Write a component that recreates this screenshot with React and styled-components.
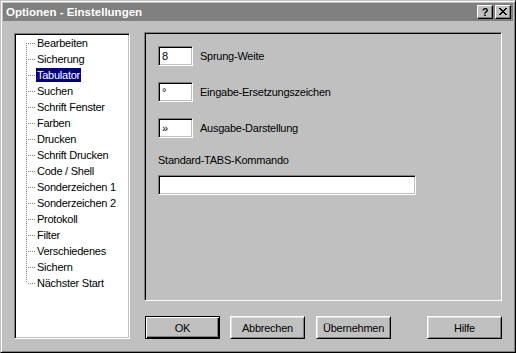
import React from "react";
import styled, { createGlobalStyle } from "styled-components";

const GlobalStyle = createGlobalStyle`
  html, body {
    margin: 0;
    padding: 0;
    background: #c0c0c0;
  }
  body {
    font-family: "Liberation Sans", Arial, sans-serif;
    font-size: 11px;
    color: #000;
  }
`;

const Window = styled.div`
  box-sizing: border-box;
  width: 516px;
  height: 353px;
  display: flex;
  flex-direction: column;
  background: #c0c0c0;
  border: 1px solid;
  border-color: #c0c0c0 #000 #000 #c0c0c0;
  box-shadow: inset 1px 1px #fff, inset -1px -1px #808080;
  padding: 2px;
`;

const TitleBar = styled.div`
  height: 18px;
  display: flex;
  align-items: center;
  background: #808080;
  padding: 0 2px 0 3px;
`;

const Title = styled.div`
  flex: 1;
  color: #fff;
  font-weight: bold;
  font-size: 11.5px;
  line-height: 18px;
`;

const CaptionButton = styled.div`
  box-sizing: border-box;
  width: 16px;
  height: 14px;
  margin-left: ${props => props.gap || 0}px;
  display: flex;
  align-items: center;
  justify-content: center;
  background: #c0c0c0;
  border: 1px solid;
  border-color: #fff #000 #000 #fff;
  box-shadow: inset -1px -1px #808080;
  font-weight: bold;
  font-size: 11px;
  line-height: 12px;
  padding-bottom: 1px;
`;

const Body = styled.div`
  flex: 1;
  display: flex;
  align-items: flex-start;
  padding: 11px 11px 0 11px;
`;

const Sunken = styled.div`
  box-sizing: border-box;
  border: 1px solid;
  border-color: #808080 #fff #fff #808080;
  box-shadow: inset 1px 1px #000, inset -1px -1px #c0c0c0;
`;

const Tree = styled(Sunken)`
  width: 117px;
  height: 306px;
  margin-top: 1px;
  padding: 1px;
  background: #fff;
`;

const Row = styled.div`
  height: 16px;
  display: flex;
  align-items: center;
  letter-spacing: -0.25px;
`;

const Connector = styled.div`
  position: relative;
  width: 20px;
  align-self: stretch;

  &::before {
    content: "";
    position: absolute;
    left: 10px;
    width: 1px;
    top: ${props => (props.first ? 8 : 0)}px;
    bottom: ${props => (props.last ? 8 : 0)}px;
    background: linear-gradient(#808080 50%, transparent 50%) 0 0 / 1px 2px;
  }

  &::after {
    content: "";
    position: absolute;
    left: 11px;
    top: 8px;
    width: 9px;
    height: 1px;
    background: linear-gradient(to right, transparent 50%, #808080 50%) 0 0 / 2px 1px;
  }
`;

const Label = styled.span`
  height: 14px;
  line-height: 14px;
  padding: 0 1px;
  white-space: nowrap;
  background: ${props => (props.selected ? "#000080" : "transparent")};
  color: ${props => (props.selected ? "#fff" : "#000")};
`;

const Side = styled.div`
  width: 359px;
  margin-left: 14px;
  display: flex;
  flex-direction: column;
`;

const Panel = styled(Sunken)`
  width: 358px;
  height: 269px;
  padding: 13px 0 0 13px;
  letter-spacing: -0.25px;
`;

const FieldRow = styled.div`
  display: flex;
  align-items: center;
  gap: 7px;
  height: 20px;
  margin-bottom: 16px;
`;

const Field = styled(Sunken)`
  width: ${props => props.width || 35}px;
  height: 20px;
  background: #fff;
  padding: 1px 0 0 3px;
  line-height: 16px;
`;

const Caption = styled.div`
  line-height: 13px;
  margin: 2px 0 8px;
`;

const Buttons = styled.div`
  display: flex;
  margin-top: 15px;
  padding-left: 1px;
`;

const Button = styled.div`
  box-sizing: border-box;
  width: 75px;
  height: 23px;
  margin-left: ${props => props.gap || 0}px;
  display: flex;
  align-items: center;
  justify-content: center;
  background: #c0c0c0;
  letter-spacing: -0.25px;
  border: 1px solid;
  border-color: ${props => (props.primary ? "#000" : "#fff #000 #000 #fff")};
  box-shadow: ${props =>
    props.primary
      ? "inset 1px 1px #fff, inset -1px -1px #000, inset -2px -2px #808080"
      : "inset 1px 1px #dfdfdf, inset -1px -1px #808080"};
  &:last-child {
    margin-left: auto;
  }
`;

const CloseGlyph = () => (
  <svg width="8" height="7" viewBox="0 0 8 7" shapeRendering="crispEdges">
    <path
      fill="#000"
      d="M0 0h2v1H0zM6 0h2v1H6zM1 1h2v1H1zM5 1h2v1H5zM2 2h4v1H2zM3 3h2v1H3zM2 4h4v1H2zM1 5h2v1H1zM5 5h2v1H5zM0 6h2v1H0zM6 6h2v1H6z"
    />
  </svg>
);

const items = [
  "Bearbeiten",
  "Sicherung",
  "Tabulator",
  "Suchen",
  "Schrift Fenster",
  "Farben",
  "Drucken",
  "Schrift Drucken",
  "Code / Shell",
  "Sonderzeichen 1",
  "Sonderzeichen 2",
  "Protokoll",
  "Filter",
  "Verschiedenes",
  "Sichern",
  "Nächster Start",
];

const fields = [
  { value: "8", label: "Sprung-Weite" },
  { value: "°", label: "Eingabe-Ersetzungszeichen" },
  { value: "»", label: "Ausgabe-Darstellung" },
];

export default function App() {
  return (
    <>
      <GlobalStyle />
      <Window>
        <TitleBar>
          <Title>Optionen - Einstellungen</Title>
          <CaptionButton>?</CaptionButton>
          <CaptionButton gap={2}>
            <CloseGlyph />
          </CaptionButton>
        </TitleBar>
        <Body>
          <Tree>
            {items.map((item, i) => (
              <Row key={item}>
                <Connector first={i === 0} last={i === items.length - 1} />
                <Label selected={item === "Tabulator"}>{item}</Label>
              </Row>
            ))}
          </Tree>
          <Side>
            <Panel>
              {fields.map(f => (
                <FieldRow key={f.label}>
                  <Field>{f.value}</Field>
                  <span>{f.label}</span>
                </FieldRow>
              ))}
              <Caption>Standard-TABS-Kommando</Caption>
              <Field width={258} />
            </Panel>
            <Buttons>
              <Button primary>OK</Button>
              <Button gap={10}>Abbrechen</Button>
              <Button gap={11}>Übernehmen</Button>
              <Button>Hilfe</Button>
            </Buttons>
          </Side>
        </Body>
      </Window>
    </>
  );
}
